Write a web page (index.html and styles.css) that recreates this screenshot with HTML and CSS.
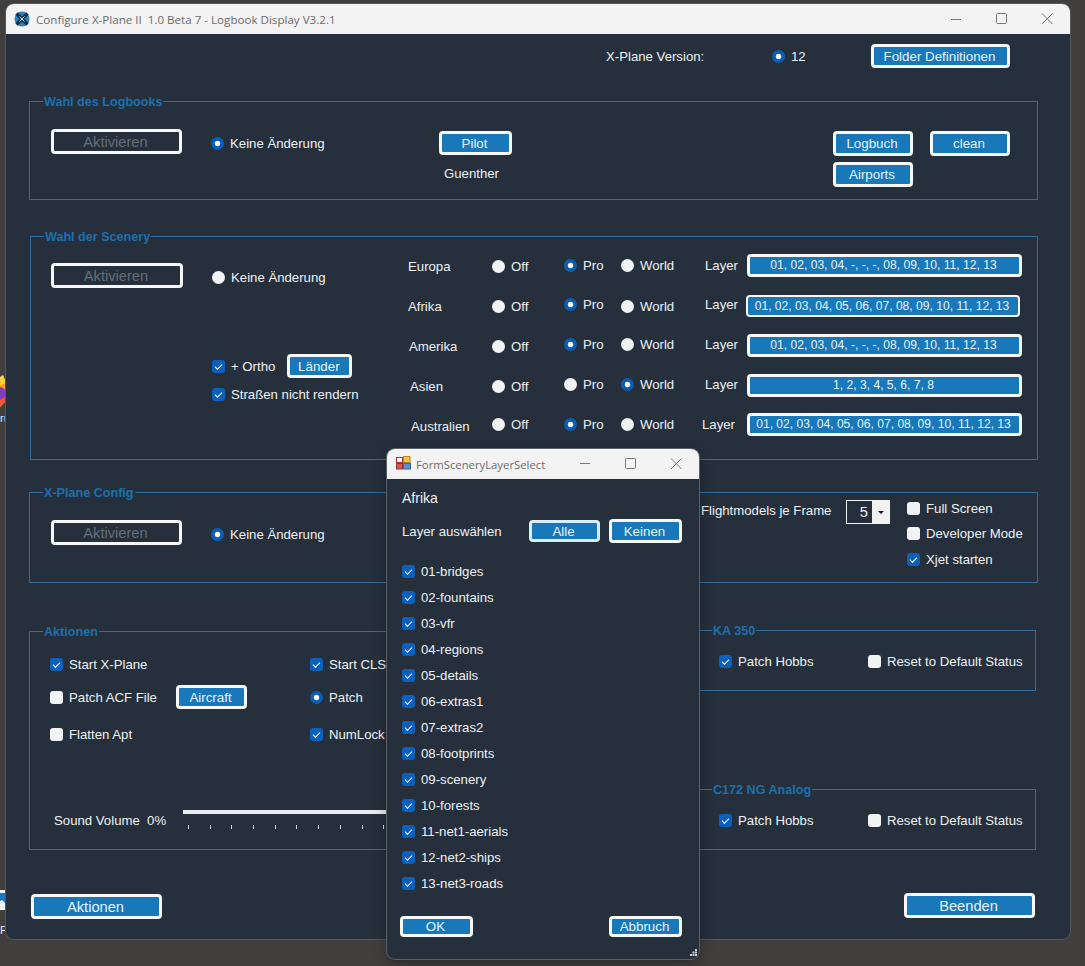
FILE: index.html
```html
<!DOCTYPE html>
<html lang="de">

<head>
    <meta charset="UTF-8">
    <title>Configure X-Plane II</title>
    <link rel="stylesheet" href="styles.css">
</head>

<body>
    <!-- bits of the desktop left of the window -->
    <div class="desk-item desk-fox">
        <svg width="6" height="34" viewBox="0 0 6 34">
            <path d="M0 8 L3 0 L6 8 V26 L0 32Z" fill="#ff9a2e"/>
            <path d="M0 2 L3 0 L6 8 L0 10Z" fill="#ffd43a"/>
            <path d="M0 12 C3 12 6 15 6 19 C6 23 3 25 0 25Z" fill="#7a3fc0"/>
            <path d="M0 25 L6 21 V26 L0 31Z" fill="#f5503a"/>
        </svg>
    </div>
    <div class="desk-item desk-label desk-label-fox">ru</div>
    <div class="desk-item desk-app">
        <svg width="6" height="22" viewBox="0 0 6 22">
            <rect width="6" height="20" fill="#f2f4f6"/>
            <path d="M0 3 H5 V13 L2 10 L0 11Z" fill="#1e78c4"/>
        </svg>
    </div>
    <div class="desk-item desk-label desk-label-app">P</div>

    <div class="window main-window">
        <div class="titlebar">
            <svg class="app-logo" width="16" height="16" viewBox="0 0 16 16">
                <circle cx="8" cy="8" r="7.5" fill="#2b82bd"/>
                <path d="M2.5 2.5 L13.5 13.5 M13.5 2.5 L2.5 13.5" stroke="#13324c" stroke-width="3.6"/>
                <path d="M5.5 5.5 L10.5 10.5 M10.5 5.5 L5.5 10.5" stroke="#cfe3f0" stroke-width="1"/>
            </svg>
            <span class="title-text">Configure X-Plane II&nbsp; 1.0 Beta 7 - Logbook Display V3.2.1</span>
            <div class="win-controls">
                <svg width="46" height="30" viewBox="0 0 46 30"><path d="M18 15.5 H28" stroke="#777"/></svg>
                <svg width="45" height="30" viewBox="0 0 45 30"><rect x="17.5" y="9.5" width="10" height="10" rx="1" fill="none" stroke="#777"/></svg>
                <svg width="46" height="30" viewBox="0 0 46 30"><path d="M18 9.5 L28.5 20 M28.5 9.5 L18 20" stroke="#777"/></svg>
            </div>
        </div>

        <div class="main-body">
            <div class="version-row">
                <span>X-Plane Version:</span>
                <label class="opt"><input type="radio" name="version" checked>12</label>
                <button class="btn btn-folder">Folder Definitionen</button>
            </div>

            <fieldset class="group group-logbook">
                <legend>Wahl des Logbooks</legend>
                <div class="logbook-grid">
                    <button class="btn btn-big btn-off" disabled>Aktivieren</button>
                    <label class="opt opt-mid"><input type="radio" name="logbook" checked>Keine Änderung</label>
                    <button class="btn btn-pilot btn-mid">Pilot</button>
                    <button class="btn btn-log btn-mid">Logbuch</button>
                    <button class="btn btn-log btn-mid">clean</button>
                    <span></span>
                    <span></span>
                    <span class="pilot-name">Guenther</span>
                    <button class="btn btn-log">Airports</button>
                </div>
            </fieldset>

            <fieldset class="group group-scenery">
                <legend>Wahl der Scenery</legend>
                <div class="scenery-body">
                    <div class="scenery-left">
                        <button class="btn btn-big btn-wider btn-off" disabled>Aktivieren</button>
                        <label class="opt opt-scenery"><input type="radio" name="scenery">Keine Änderung</label>
                        <span></span>
                        <div class="ortho-row">
                            <label class="opt"><input type="checkbox" checked>+ Ortho</label>
                            <button class="btn btn-laender">Länder</button>
                        </div>
                        <span></span>
                        <label class="opt"><input type="checkbox" checked>Straßen nicht rendern</label>
                    </div>

                    <div class="regions">
                        <span>Europa</span>
                        <label class="opt"><input type="radio" name="eu">Off</label>
                        <label class="opt up1"><input type="radio" name="eu" checked>Pro</label>
                        <label class="opt up1"><input type="radio" name="eu">World</label>
                        <span class="layer-label up1">Layer</span>
                        <button class="btn btn-layer up1">01, 02, 03, 04, -, -, -, 08, 09, 10, 11, 12, 13</button>

                        <span>Afrika</span>
                        <label class="opt"><input type="radio" name="af">Off</label>
                        <label class="opt up2"><input type="radio" name="af" checked>Pro</label>
                        <label class="opt"><input type="radio" name="af">World</label>
                        <span class="layer-label up2">Layer</span>
                        <button class="btn btn-layer btn-layer-focus">01, 02, 03, 04, 05, 06, 07, 08, 09, 10, 11, 12, 13</button>

                        <span class="region-in1">Amerika</span>
                        <label class="opt"><input type="radio" name="am">Off</label>
                        <label class="opt up2"><input type="radio" name="am" checked>Pro</label>
                        <label class="opt up2"><input type="radio" name="am">World</label>
                        <span class="layer-label up2">Layer</span>
                        <button class="btn btn-layer up1">01, 02, 03, 04, -, -, -, 08, 09, 10, 11, 12, 13</button>

                        <span class="region-in2">Asien</span>
                        <label class="opt"><input type="radio" name="as">Off</label>
                        <label class="opt up2"><input type="radio" name="as">Pro</label>
                        <label class="opt up2"><input type="radio" name="as" checked>World</label>
                        <span class="layer-label up2">Layer</span>
                        <button class="btn btn-layer up1">1, 2, 3, 4, 5, 6, 7, 8</button>

                        <span class="region-in3">Australien</span>
                        <label class="opt up2"><input type="radio" name="au">Off</label>
                        <label class="opt up2"><input type="radio" name="au" checked>Pro</label>
                        <label class="opt up2"><input type="radio" name="au">World</label>
                        <span class="layer-label layer-label-out up2">Layer</span>
                        <button class="btn btn-layer up2">01, 02, 03, 04, 05, 06, 07, 08, 09, 10, 11, 12, 13</button>
                    </div>
                </div>
            </fieldset>

            <fieldset class="group group-config">
                <legend>X-Plane Config</legend>
                <div class="config-grid">
                    <button class="btn btn-big btn-off config-btn" disabled>Aktivieren</button>
                    <label class="opt config-radio"><input type="radio" name="config" checked>Keine Änderung</label>
                    <span class="fm-label">Flightmodels je Frame</span>
                    <div class="spinner">
                        <span class="spinner-value">5</span>
                        <span class="spinner-arrow"></span>
                    </div>
                    <div class="config-opts">
                        <label class="opt"><input type="checkbox">Full Screen</label>
                        <label class="opt"><input type="checkbox">Developer Mode</label>
                        <label class="opt"><input type="checkbox" checked>Xjet starten</label>
                    </div>
                </div>
            </fieldset>

            <div class="actions-row">
                <fieldset class="group group-actions">
                    <legend>Aktionen</legend>
                    <div class="actions-grid">
                        <label class="opt"><input type="checkbox" checked>Start X-Plane</label>
                        <span></span>
                        <label class="opt"><input type="checkbox" checked>Start CLS2Sim</label>
                        <label class="opt"><input type="checkbox">Patch ACF File</label>
                        <button class="btn btn-aircraft">Aircraft</button>
                        <label class="opt"><input type="radio" name="patch" checked>Patch</label>
                        <label class="opt"><input type="checkbox">Flatten Apt</label>
                        <span></span>
                        <label class="opt"><input type="checkbox" checked>NumLock</label>
                    </div>
                    <div class="sound-row">
                        <span class="sound-label">Sound Volume  0%</span>
                        <div class="slider"></div>
                    </div>
                </fieldset>

                <div class="plane-groups">
                    <fieldset class="group group-plane">
                        <legend>KA 350</legend>
                        <div class="plane-grid">
                            <label class="opt"><input type="checkbox" checked>Patch Hobbs</label>
                            <label class="opt"><input type="checkbox">Reset to Default Status</label>
                        </div>
                    </fieldset>
                    <fieldset class="group group-plane">
                        <legend>C172 NG Analog</legend>
                        <div class="plane-grid">
                            <label class="opt"><input type="checkbox" checked>Patch Hobbs</label>
                            <label class="opt"><input type="checkbox">Reset to Default Status</label>
                        </div>
                    </fieldset>
                </div>
            </div>

            <div class="bottom-row">
                <button class="btn btn-big btn-low">Aktionen</button>
                <button class="btn btn-big">Beenden</button>
            </div>
        </div>
    </div>

    <!-- layer dialog sits on top of the main window -->
    <div class="window layer-dialog">
        <div class="titlebar">
            <svg class="form-icon" width="15" height="14" viewBox="0 0 15 14">
                <rect x="0.5" y="1.5" width="6" height="5" fill="#fff" stroke="#a33"/>
                <rect x="7.5" y="0.5" width="6.5" height="6" fill="#f4c542" stroke="#b08a20"/>
                <rect x="0.5" y="7.5" width="6" height="5.5" fill="#d9534a" stroke="#933"/>
                <rect x="7.5" y="7.5" width="7" height="5.5" fill="#5b8fd0" stroke="#3a649c"/>
            </svg>
            <span class="title-text">FormSceneryLayerSelect</span>
            <div class="win-controls">
                <svg width="45" height="30" viewBox="0 0 45 30"><path d="M18 14.5 H28" stroke="#777"/></svg>
                <svg width="46" height="30" viewBox="0 0 46 30"><rect x="18.5" y="9.5" width="10" height="10" rx="1" fill="none" stroke="#777"/></svg>
                <svg width="46" height="30" viewBox="0 0 46 30"><path d="M18 9.5 L28.5 20 M28.5 9.5 L18 20" stroke="#777"/></svg>
            </div>
        </div>
        <div class="dialog-body">
            <div class="dialog-region">Afrika</div>
            <div class="dialog-pick">
                <span class="pick-label">Layer auswählen</span>
                <button class="btn btn-alle">Alle</button>
                <button class="btn btn-keinen">Keinen</button>
            </div>
            <div class="layer-list">
                <label class="opt"><input type="checkbox" checked>01-bridges</label>
                <label class="opt"><input type="checkbox" checked>02-fountains</label>
                <label class="opt"><input type="checkbox" checked>03-vfr</label>
                <label class="opt"><input type="checkbox" checked>04-regions</label>
                <label class="opt"><input type="checkbox" checked>05-details</label>
                <label class="opt"><input type="checkbox" checked>06-extras1</label>
                <label class="opt"><input type="checkbox" checked>07-extras2</label>
                <label class="opt"><input type="checkbox" checked>08-footprints</label>
                <label class="opt"><input type="checkbox" checked>09-scenery</label>
                <label class="opt"><input type="checkbox" checked>10-forests</label>
                <label class="opt"><input type="checkbox" checked>11-net1-aerials</label>
                <label class="opt"><input type="checkbox" checked>12-net2-ships</label>
                <label class="opt"><input type="checkbox" checked>13-net3-roads</label>
            </div>
            <div class="dialog-footer">
                <button class="btn btn-dialog">OK</button>
                <button class="btn btn-dialog">Abbruch</button>
            </div>
        </div>
        <svg class="grip" width="7" height="7" viewBox="0 0 7 7" fill="#c9ccd0">
            <rect x="5" y="0" width="2" height="2"/>
            <rect x="2.5" y="2.5" width="2" height="2"/>
            <rect x="5" y="2.5" width="2" height="2"/>
            <rect x="0" y="5" width="2" height="2"/>
            <rect x="2.5" y="5" width="2" height="2"/>
            <rect x="5" y="5" width="2" height="2"/>
        </svg>
    </div>
</body>

</html>
```

FILE: styles.css
```css
* {
    box-sizing: border-box;
}

body {
    margin: 0;
    height: 966px;
    overflow: hidden;
    background: #403f3d;
    color: #eef1f4;
    font-family: "Liberation Sans", Arial, sans-serif;
    font-size: 13.2px;
}

/* desktop leftovers */

.desk-item {
    position: absolute;
    left: 0;
    width: 6px;
    overflow: hidden;
}

.desk-item svg {
    display: block;
}

.desk-fox {
    top: 375px;
    height: 34px;
}

.desk-app {
    top: 890px;
    height: 22px;
}

.desk-label {
    font-size: 11px;
    line-height: 14px;
    color: #e8e8e8;
}

.desk-label-fox {
    top: 411px;
}

.desk-label-app {
    top: 923px;
}

/* windows */

.window {
    position: absolute;
    background: #25303c;
    border-radius: 8px;
    overflow: hidden;
}

.main-window {
    left: 6px;
    top: 4px;
    width: 1064px;
    height: 935px;
    box-shadow: 0 0 0 1px #55585b;
}

.layer-dialog {
    left: 387px;
    top: 449px;
    width: 312px;
    height: 510px;
    box-shadow: 0 0 0 1px #5a6068, 0 4px 14px rgba(0, 0, 0, 0.35);
}

.titlebar {
    display: flex;
    align-items: center;
    height: 30px;
    background: #f3f3f3;
    color: #6c6c6c;
    padding-left: 8px;
}

.app-logo {
    margin-right: 6px;
}

.form-icon {
    margin: 0 5px 2px 1px;
}

.title-text {
    font-family: "Open Sans", sans-serif;
    font-size: 11.6px;
}

.layer-dialog .title-text {
    font-size: 11.3px;
}

.win-controls {
    display: flex;
    margin-left: auto;
}

.win-controls svg {
    display: block;
}

/* shared controls */

.btn {
    display: block;
    height: 25px;
    padding: 0 2px 0 0;
    border: 3px solid #f5f7f8;
    border-radius: 4px;
    background: #1878b9;
    color: #e6f4fd;
    font-family: inherit;
    font-size: 13.33px;
    white-space: nowrap;
}

.btn-big {
    width: 131px;
    font-size: 14.67px;
}

.btn-wider {
    width: 132px;
}

.btn-off {
    background: #25303c;
    color: #666d75;
}

.opt {
    display: flex;
    align-items: center;
    gap: 6px;
    height: 24px;
    white-space: nowrap;
}

.opt input {
    appearance: none;
    flex: none;
    display: grid;
    place-content: center;
    width: 13px;
    height: 13px;
    margin: 0;
    background: #f1f2f3;
}

.opt input[type="radio"] {
    border-radius: 50%;
}

.opt input[type="radio"]:checked {
    background: radial-gradient(circle, #fff 0 2.2px, #0a5cb4 3.2px);
}

.opt input[type="checkbox"] {
    border-radius: 3px;
}

.opt input[type="checkbox"]:checked {
    background: #0b60bd;
}

.opt input[type="checkbox"]:checked::after {
    content: "";
    width: 6px;
    height: 3px;
    margin-top: -1px;
    border-left: 1px solid #fff;
    border-bottom: 1px solid #fff;
    transform: rotate(-45deg);
}

.group {
    margin: 0;
    padding: 1px 0 0;
    min-width: 0;
    border: 1px solid #2e6f9f;
}

/* 15px tall so the border runs one pixel above the middle of the text */

.group legend {
    margin-left: 13px;
    padding: 1px 1px 0;
    font-size: 12.6px;
    font-weight: bold;
    line-height: 14px;
    color: #1d6fae;
}

/* main window body */

.main-body {
    padding: 10px 0 0 23px;
}

.version-row {
    display: grid;
    grid-template-columns: 166px 99px 139px;
    align-items: center;
    margin-left: 577px;
    height: 24px;
}

.btn-folder {
    width: 139px;
    height: 24px;
}

.group-logbook {
    width: 1009px;
    height: 106px;
    margin-top: 26px;
}

.logbook-grid {
    display: grid;
    grid-template-columns: 160px 228px 394px 97px 80px;
    grid-template-rows: 52px auto;
    align-items: start;
    padding-left: 21px;
}

.logbook-grid > .btn-big {
    margin-top: 19px;
}

.opt-mid,
.btn-mid {
    margin-top: 21px;
}

.btn-pilot {
    width: 73px;
    height: 24px;
}

.btn-log {
    width: 80px;
}

.pilot-name {
    margin: 2px 0 0 5px;
    line-height: 20px;
}

.group-scenery {
    width: 1008px;
    height: 231px;
    margin: 29px 0 0 1px;
}

.scenery-body {
    display: flex;
    padding-left: 20px;
}

.scenery-left {
    display: grid;
    grid-template-columns: 161px 196px;
    grid-template-rows: 109px 28px 24px;
    align-items: start;
    width: 357px;
}

.scenery-left > .btn-big {
    margin-top: 18px;
}

.opt-scenery {
    margin-top: 20px;
}

.ortho-row {
    display: flex;
    align-items: center;
    gap: 12px;
}

.btn-laender {
    width: 65px;
    height: 24px;
}

.regions {
    display: grid;
    grid-template-columns: 84px 72px 57px 81px 44px 276px;
    grid-auto-rows: 40px;
    align-items: center;
    margin-top: 1px;
}

/* WinForms controls are not quite on one line, keep the small steps */

.up1 {
    margin-bottom: 2px;
}

.up2 {
    margin-bottom: 4px;
}

.region-in1 {
    padding-left: 1px;
}

.region-in2 {
    padding-left: 2px;
}

.region-in3 {
    padding-left: 3px;
}

.layer-label {
    padding-left: 3px;
}

.layer-label-out {
    padding-left: 0;
}

.btn-layer {
    width: 275px;
    height: 23px;
    margin-left: 1px;
    font-size: 12.1px;
}

.btn-layer-focus {
    width: 274px;
    height: 22px;
    margin-left: 0;
    border-width: 2px;
}

.group-config {
    width: 1009px;
    height: 98px;
    margin-top: 25px;
}

.config-grid {
    display: grid;
    grid-template-columns: 160px 490px 145px 61px 120px;
    align-items: start;
    padding-left: 21px;
}

.config-btn {
    margin-top: 19px;
}

.config-radio {
    margin-top: 21px;
}

.fm-label {
    line-height: 20px;
}

.spinner {
    display: flex;
    width: 44px;
    height: 24px;
    margin-top: -1px;
    border: 1px solid #f1f2f3;
    background: #25303c;
}

.spinner-value {
    width: 25px;
    padding-right: 4px;
    text-align: right;
    font-size: 14.67px;
    line-height: 22px;
}

.spinner-arrow {
    flex: 1;
    display: grid;
    place-content: center;
    background: #f1f1f1;
}

.spinner-arrow::after {
    content: "";
    border: 3px solid transparent;
    border-top: 3px solid #111;
    border-bottom: 0;
}

.config-opts {
    display: grid;
    grid-auto-rows: 25.5px;
    margin-top: -5px;
}

.actions-row {
    display: flex;
    gap: 20px;
    width: 1007px;
    height: 227px;
    margin-top: 40px;
}

.group-actions {
    width: 591px;
    height: 226px;
    margin-top: 1px;
}

.actions-grid {
    display: grid;
    grid-template-columns: 126px 134px 120px;
    grid-template-rows: 33px 37px 24px;
    align-items: start;
    padding: 12px 0 0 20px;
}

.btn-aircraft {
    width: 71px;
    height: 24px;
}

.sound-row {
    display: flex;
    margin-top: 62px;
    padding-left: 24px;
    height: 24px;
}

.sound-label {
    flex: none;
    width: 129px;
    line-height: 26px;
    white-space: pre;
}

/* track plus tick marks drawn as backgrounds */

.slider {
    flex: 1;
    background:
        linear-gradient(#e9ecee, #e9ecee) 0 2px / 100% 4px no-repeat,
        repeating-linear-gradient(90deg, #cfd3d6 0 1px, transparent 1px 21.7px) 5px 17px / 100% 4px no-repeat;
}

.plane-groups {
    display: flex;
    flex-direction: column;
    justify-content: space-between;
    width: 396px;
}

.group-plane {
    height: 68px;
}

.group-plane legend {
    margin-left: 71px;
}

.plane-grid {
    display: grid;
    grid-template-columns: 149px auto;
    padding: 10px 0 0 78px;
}

.bottom-row {
    display: flex;
    justify-content: space-between;
    align-items: start;
    width: 1006px;
    margin-top: 43px;
    padding-left: 2px;
}

.btn-low {
    margin-top: 1px;
}

/* layer dialog */

.dialog-body {
    padding: 9px 0 0 15px;
}

.dialog-region {
    font-size: 14px;
    line-height: 20px;
}

.dialog-pick {
    display: flex;
    align-items: center;
    height: 24px;
    margin-top: 11px;
}

.pick-label {
    width: 127px;
}

.btn-alle {
    width: 71px;
    height: 22px;
    margin-right: 9px;
    border-color: #d8eefb;
}

.btn-keinen {
    width: 73px;
    height: 24px;
}

.layer-list {
    display: grid;
    grid-auto-rows: 26px;
    margin-top: 15px;
}

.layer-list .opt {
    height: 26px;
}

.dialog-footer {
    display: flex;
    justify-content: space-between;
    width: 282px;
    margin: 20px 0 0 -2px;
}

.btn-dialog {
    width: 73px;
    height: 21px;
}

.grip {
    position: absolute;
    right: 2px;
    bottom: 3px;
}
```
